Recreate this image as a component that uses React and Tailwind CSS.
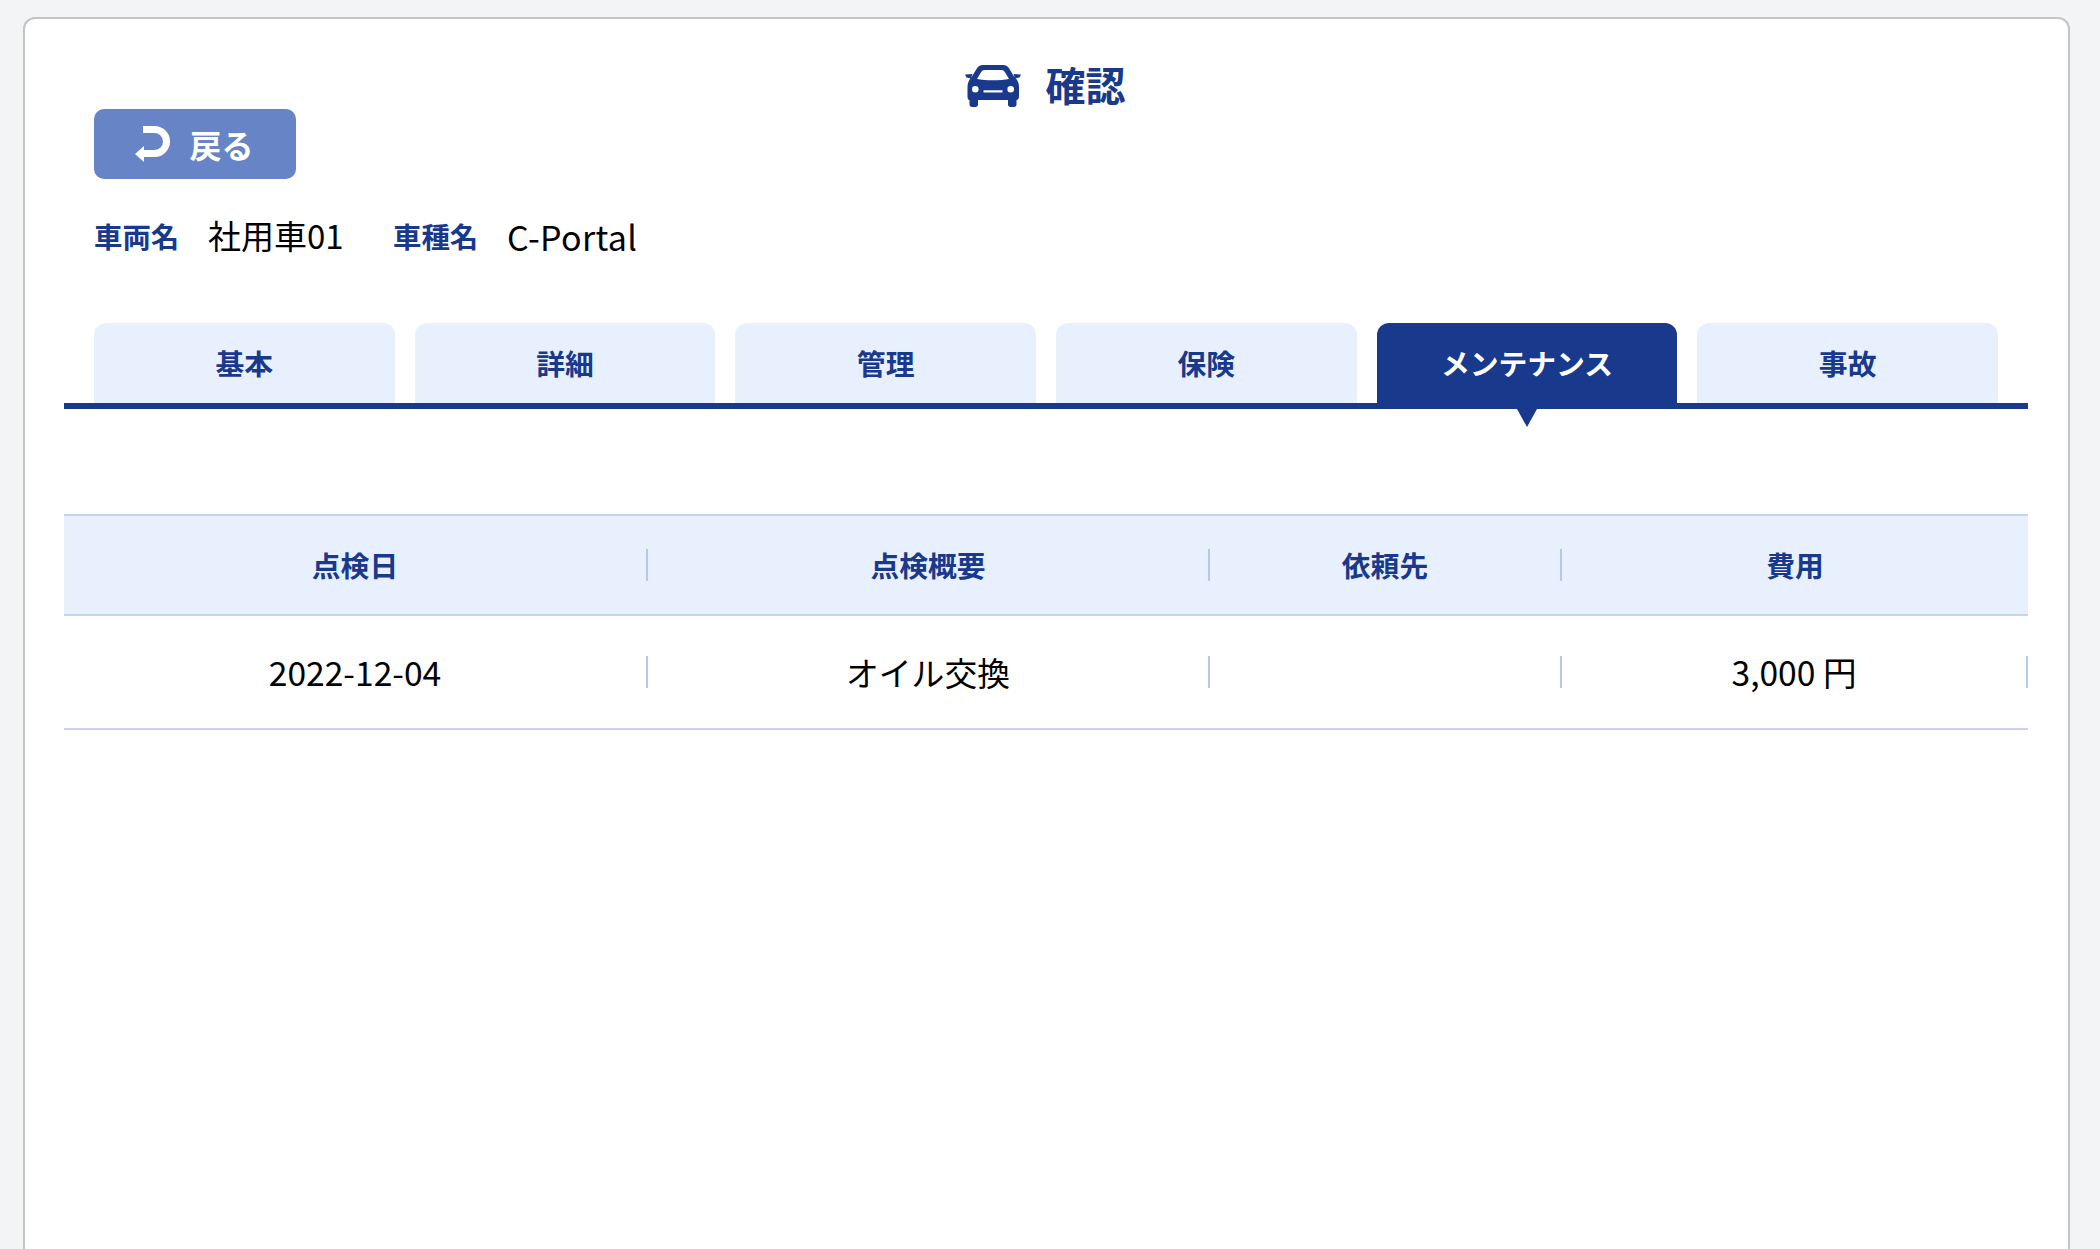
const FONT = "font-['Noto_Sans_CJK_JP','Noto_Sans',sans-serif]";

function CarIcon() {
  return (
    <svg width="56" height="42" viewBox="0 0 56 42" fill="#18398c" aria-hidden="true">
      <path
        fillRule="evenodd"
        d="M18 0H38C41 0 43 1.500 44.500 4L49 11.500C52.500 14.500 54 18 54 22V31C54 33.500 53 35 51.500 35V39.500C51.500 41 50.500 42 49 42H45.500C44 42 43 41 43 39.500V35H13V39.500C13 41 12 42 10.500 42H7C5.500 42 4.500 41 4.500 39.500V35C3 35 2.500 33.500 2.500 31V22C2.500 18 4 14.500 7 11.500L11.500 4C13 1.500 15 0 18 0ZM19.500 5C18 5 17 5.800 16.200 7L12 14C20 15.800 36 15.800 44 14L39.800 7C39 5.800 38 5 36.500 5ZM10.300 21A3.300 3.300 0 1 0 10.300 27.600A3.300 3.300 0 1 0 10.300 21ZM45.700 21A3.300 3.300 0 1 0 45.700 27.600A3.300 3.300 0 1 0 45.700 21ZM18.500 25.200V27.500H37.500V25.200Z"
      />
      <path d="M0 9.500L7.500 9L6 13.500L1.500 12.500Z" />
      <path d="M56 9.500L48.500 9L50 13.500L54.500 12.500Z" />
    </svg>
  );
}

function BackIcon() {
  return (
    <svg width="35" height="36" viewBox="0 0 35 36" fill="none" aria-hidden="true">
      <path d="M8 3.500H19.500A12 12 0 0 1 19.500 27.500H8" stroke="#fff" strokeWidth="7" />
      <path d="M9 20V36L0 28Z" fill="#fff" />
    </svg>
  );
}

const tabs = ["基本", "詳細", "管理", "保険", "メンテナンス", "事故"];

function Cell({ children, divider = true, head = false, size = "text-[33.6px]" }) {
  return (
    <div className="flex items-center min-w-0">
      <div className={`flex-1 text-center ${head ? "text-[28.8px] font-bold text-[#18398c]" : `${size} text-black`}`}>
        {children}
      </div>
      {divider && <div className="w-[2px] h-[32px] bg-[#b6c9ea] shrink-0" />}
    </div>
  );
}

export default function App() {
  return (
    <div className={`h-[1249px] overflow-hidden bg-[#f3f4f6] pt-[17px] pl-[23px] pr-[30px] ${FONT}`}>
      <div className="h-[1300px] rounded-[12px] border-2 border-[#c4c4c4] bg-white pl-[39px] pr-[40px]">
        <div className="flex items-center justify-center gap-[25px] h-[46px] mt-[44px] pr-[2px]">
          <CarIcon />
          <h1 className="text-[40px] leading-[42px] font-bold text-[#18398c] -mt-[4px]">確認</h1>
        </div>

        <div className="pl-[30px]">
          <button className="flex items-center justify-center gap-[19px] w-[202px] h-[70px] rounded-[10px] bg-[#6784c6] text-white text-[32px] font-bold pr-[1px]">
            <BackIcon />
            <span>戻る</span>
          </button>

          <div className="flex items-center h-[48px] mt-[33px]">
            <span className="text-[28.4px] font-bold text-[#18398c] w-[114px]">車両名</span>
            <span className="text-[33px] text-black w-[185px]">社用車01</span>
            <span className="text-[28.4px] font-bold text-[#18398c] w-[114px]">車種名</span>
            <span className="text-[34px] tracking-[0.3px] text-black">C-Portal</span>
          </div>
        </div>

        <div className="grid grid-cols-6 gap-[20px] pl-[30px] pr-[30px] mt-[63px] border-b-[6px] border-[#18398c]">
          {tabs.map((t) => {
            const active = t === "メンテナンス";
            return (
              <div
                key={t}
                className={`relative h-[80px] rounded-t-[12px] flex items-center justify-center text-[28.8px] font-bold ${
                  active ? "bg-[#18398c] text-white" : "bg-[#e8f0fd] text-[#18398c]"
                }`}
              >
                {t}
                {active && (
                  <span className="absolute left-1/2 -translate-x-1/2 top-[86px] w-0 h-0 border-x-[10.5px] border-x-transparent border-t-[18px] border-t-[#18398c]" />
                )}
              </div>
            );
          })}
        </div>

        <div className="mt-[105px]">
          <div className="grid grid-cols-[584px_562px_352px_466px] h-[102px] border-y-2 border-[#c5d5f0] bg-[#e8f0fd]">
            <Cell head>点検日</Cell>
            <Cell head>点検概要</Cell>
            <Cell head>依頼先</Cell>
            <Cell head divider={false}>費用</Cell>
          </div>
          <div className="grid grid-cols-[584px_562px_352px_466px] h-[114px] border-b-2 border-[#c5d5f0]">
            <Cell>2022-12-04</Cell>
            <Cell size="text-[32.8px]">オイル交換</Cell>
            <Cell></Cell>
            <Cell>3,000 円</Cell>
          </div>
        </div>
      </div>
    </div>
  );
}
